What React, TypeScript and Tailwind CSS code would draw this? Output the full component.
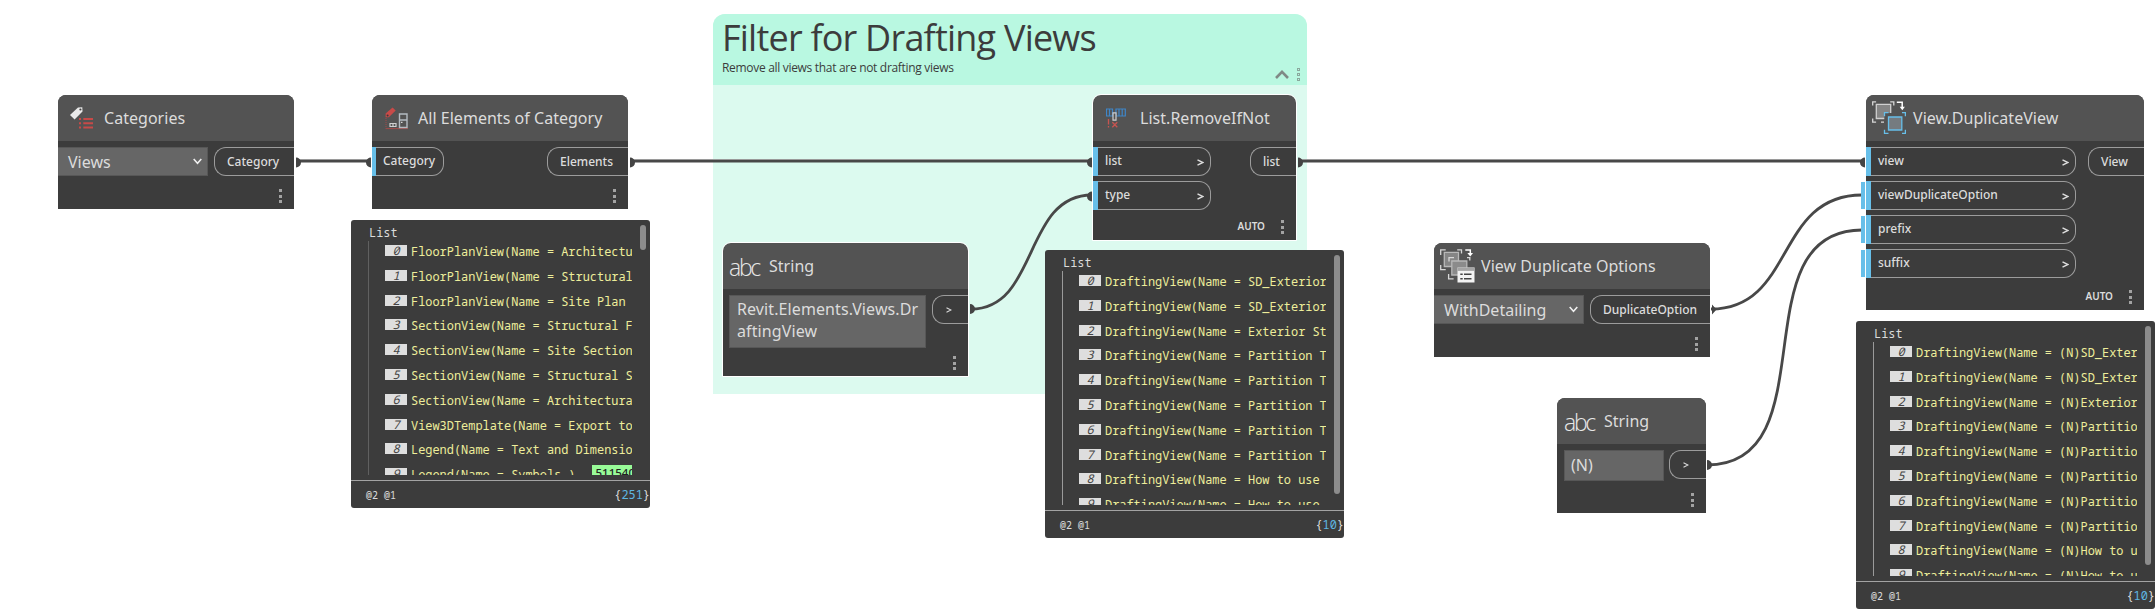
import React, { type ReactNode } from "react";

const sans = "font-['Noto_Sans','Open_Sans',sans-serif]";
const mono = "font-['Noto_Sans_Mono','Liberation_Mono',monospace]";

function Dots() {
  return (
    <div className="flex w-[3px] flex-col gap-[2.5px]">
      <i className="h-[3px] w-[3px] bg-[#a3a3a3]" />
      <i className="h-[3px] w-[3px] bg-[#a3a3a3]" />
      <i className="h-[3px] w-[3px] bg-[#a3a3a3]" />
    </div>
  );
}

type NodeProps = {
  place: string;
  title: string;
  icon: ReactNode;
  iconBox: string;
  auto?: boolean;
  children: ReactNode;
};

function Node({ place, title, icon, iconBox, auto, children }: NodeProps) {
  return (
    <section className={`absolute flex flex-col rounded-t-[8px] bg-[#3c3c3c] text-[#dcdcdc] ${place}`}>
      <header className="flex h-[46px] shrink-0 items-center rounded-t-[8px] bg-[#535353]">
        <div className={`shrink-0 ${iconBox}`}>{icon}</div>
        <h2 className="whitespace-nowrap text-[16px] leading-[22px] tracking-[0.03px]">{title}</h2>
      </header>
      <div className="flex items-start justify-between pt-[6px]">{children}</div>
      <footer className="mt-auto flex items-center justify-end pr-[12px] pb-[6px]">
        {auto && <span className="mr-[16px] -mt-[2px] text-[10px] leading-[12px] font-semibold">AUTO</span>}
        <Dots />
      </footer>
    </section>
  );
}

function Input({ label, size, chevron, tab }: { label: string; size: string; chevron?: boolean; tab?: boolean }) {
  return (
    <div
      className={`relative flex h-[29px] items-center justify-between rounded-r-[12px] border border-l-0 border-[#9c9c9c] pr-[6px] text-[12px] font-medium ${size}`}
    >
      {tab && <span className="absolute top-0 -left-[5px] h-[27px] w-[4px] bg-[#67bfe9]" />}
      <span className="flex h-[29px] items-center">
        <span className={`mr-[7px] h-[29px] bg-[#67bfe9] ${chevron ? "w-[5px]" : "w-[4px]"}`} />
        <span className="-mt-[1px]">{label}</span>
      </span>
      {chevron && <Caret />}
    </div>
  );
}

function Caret() {
  return (
    <svg className="mt-px h-[7px] w-[7px]" viewBox="0 0 7 7" fill="none" stroke="#dcdcdc" strokeWidth="1.5">
      <path d="M0.5 0.8 6 3.5 0.5 6.2" />
    </svg>
  );
}

function Output({ label, size }: { label: ReactNode; size: string }) {
  return (
    <div
      className={`flex h-[29px] shrink-0 items-center rounded-l-[12px] border border-r-0 border-[#9c9c9c] pl-[12px] text-[12px] font-medium ${size}`}
    >
      {label}
    </div>
  );
}

function Select({ value, size }: { value: string; size: string }) {
  return (
    <div className={`flex h-[29px] items-center justify-between border border-l-0 border-[#575757] bg-[#666] pr-[5px] pl-[10px] text-[16px] ${size}`}>
      <span>{value}</span>
      <svg className="h-[7px] w-[9px]" viewBox="0 0 9 7" fill="none" stroke="#efefef" strokeWidth="1.6">
        <path d="M0.7 1 4.5 5.2 8.3 1" />
      </svg>
    </div>
  );
}

const smallCaret = (
  <svg className="h-[6px] w-[6px]" viewBox="0 0 6 6" fill="none" stroke="#dcdcdc" strokeWidth="1.1">
    <path d="M0.5 0.8 5 3 0.5 5.2" />
  </svg>
);

const abc = <span className="relative top-px font-['Open_Sans','Lato',sans-serif] text-[23px] leading-[30px] font-light tracking-[-2.3px] text-[#e8e8e8]">abc</span>;

const categoriesIcon = (
  <svg className="h-[22px] w-[24px]" viewBox="0 0 24 22">
    <path d="M0 8 8 0.4 12.3 0.2 12.5 4.6 4.6 12.6Z" fill="#e9e9e9" />
    <circle cx="10.4" cy="2.5" r="1.1" fill="#444" />
    <path d="M9 12h2M9 16.2h2M9 20.4h2M13.3 12h9.7M13.3 16.2h9.7M13.3 20.4h9.7" stroke="#c74a48" strokeWidth="2" />
  </svg>
);

const elementsIcon = (
  <svg className="h-[23px] w-[24px]" viewBox="0 0 24 23" fill="none">
    <path d="M0.6 6.6 7.6 0.4 10.7 3.4 3.8 10.2 0.6 10.2Z" fill="#c74a48" />
    <circle cx="2.6" cy="8.4" r="1" fill="#3a3a3a" />
    <path d="M1 11v10" stroke="#a34a48" strokeDasharray="1 1" />
    <path d="M0.5 21.6h22.5" stroke="#a34a48" />
    <path d="M5 16.5h6v3H5zM8 16.5v3" stroke="#cfcfcf" strokeWidth="1.2" />
    <path d="M14.5 7h7.5v13.5h-7.5zM14.5 13h7.5" stroke="#b4bcc2" strokeWidth="1.4" />
    <path d="M16 15.3h1.5" stroke="#d8d8d8" strokeWidth="1.2" />
  </svg>
);

const removeIcon = (
  <svg className="h-[20px] w-[20px]" viewBox="0 0 20 20" fill="none">
    <path d="M0.5 1h6v7h-6zM3.5 1v7M10 1h9.3v7H10zM13 1v7M16.2 1v7" stroke="#3f86c8" strokeWidth="1.2" />
    <path d="M7 4.8h3v7.4H7z" fill="#535353" stroke="#cfcfcf" strokeWidth="1.2" />
    <path d="M2.5 11v5.4M2.5 18v1.6M6.3 14.2l5 5M11.3 14.2l-5 5" stroke="#c75450" strokeWidth="1.3" />
  </svg>
);

const duplicateIcon = (
  <svg className="-mt-px h-[33px] w-[34px]" viewBox="0 0 34 33" fill="none" strokeWidth="1.3">
    <path d="M0.7 4.5V0.8h3.4M18.2 0.8h3.6v3.7M0.7 17.5v3.7h3.4M12 21.2H9" stroke="#d8d8d8" />
    <path d="M4.3 3.3h14.4v14.2H4.3z" fill="#858585" stroke="#d0d0d0" />
    <path d="M24.8 1.3h5.4v6" stroke="#fff" strokeWidth="1.5" />
    <path d="M27.7 5.8h5.2l-2.6 3.4z" fill="#fff" />
    <path d="M12.3 12h13v15h-13z" fill="#535353" />
    <path d="M12.5 15.2v-3.6h4M30 11.6h3.4v3.6M12.5 28.7v3.6h4M30 32.3h3.4v-3.6" stroke="#67bfe9" />
    <path d="M16.5 16h13.3v13H16.5z" fill="#757b80" stroke="#67bfe9" />
  </svg>
);

const optionsIcon = (
  <svg className="-mt-px h-[34px] w-[35px]" viewBox="0 0 35 34" fill="none" strokeWidth="1.3">
    <path d="M0.7 6V0.8h5M17.2 0.8h4.3v3.7M0.7 16v4.6h5" stroke="#d8d8d8" />
    <path d="M4.3 3.3h14.2v14.2H4.3z" fill="#858585" stroke="#b8b8b8" />
    <path d="M25.3 0.9h5v4" stroke="#fff" strokeWidth="1.5" />
    <path d="M27.4 4h5.6l-2.8 3.6z" fill="#fff" />
    <path d="M9 12.5V8.6h5M27 8.6h2.8v3M8.6 25v4.8h5" stroke="#d8d8d8" />
    <path d="M11.8 12h15v14h-15z" fill="#8b8b8b" stroke="#b8b8b8" />
    <path d="M17.5 18.5h17v15h-17z" fill="#f3f3f3" />
    <path d="M17.5 18.5h17v3.4h-17z" fill="#a5a5a5" />
    <path d="M20.3 25.2h2.4M24 25.2h7.5M20.3 29.7h2.4M24 29.7h7.5" stroke="#444" strokeWidth="1.5" />
  </svg>
);

type PreviewProps = {
  place: string;
  rows: string[];
  rule: string;
  count: string;
  thumb: string;
  tag?: string;
};

function Preview({ place, rows, rule, count, thumb, tag }: PreviewProps) {
  return (
    <section className={`absolute h-[288px] w-[299px] rounded-[3px] bg-[#3c3c3c] text-[11.93px] ${mono} ${place}`}>
      <div className="flex h-[261px] flex-col border-b border-[#a3a3a3] pb-[5px] pl-[18px]">
        <div className="h-[21px] shrink-0 pt-[3px] leading-[18px] text-[#dcdcdc]">List</div>
        <div className={`-ml-px flex min-h-0 w-[264px] flex-1 flex-col overflow-hidden border-l pt-px ${rule}`}>
          {rows.map((row, i) => (
            <div key={row + i} className="flex h-[24.8px] shrink-0 items-start">
              <span className="mt-[1px] ml-[16px] flex h-[15px] w-[22px] shrink-0 items-center justify-center bg-[#dedede] bg-clip-content py-[2px] pl-0 leading-[15px] text-[#444] italic">
                {i}
              </span>
              <span className="ml-[4px] leading-[18px] whitespace-pre text-[#eeee9b]">{row}</span>
              {tag && i === 9 && (
                <span className="ml-[16px] h-[14px] bg-[#98fb98] px-[4px] font-['Noto_Sans',sans-serif] text-[11.5px] leading-[16px] font-medium text-[#222]">
                  {tag}
                </span>
              )}
            </div>
          ))}
        </div>
      </div>
      <span className={`absolute top-[5px] left-[289px] w-[6px] rounded-full bg-[#8c8c8c] ${thumb}`} />
      <div className="flex h-[27px] items-center justify-between pl-[15px] text-[#dcdcdc]">
        <span className="mt-px text-[10px]">@2 @1</span>
        <span>
          {"{"}
          <span className="text-[#5fb6e2]">{count}</span>
          {"}"}
        </span>
      </div>
    </section>
  );
}

const allElements = [
  "FloorPlanView(Name = Architectu",
  "FloorPlanView(Name = Structural",
  "FloorPlanView(Name = Site Plan ",
  "SectionView(Name = Structural F",
  "SectionView(Name = Site Section",
  "SectionView(Name = Structural S",
  "SectionView(Name = Architectura",
  "View3DTemplate(Name = Export to",
  "Legend(Name = Text and Dimensio",
  "Legend(Name = Symbols )",
];

const viewNames = [
  "SD_Exterior",
  "SD_Exterior",
  "Exterior St",
  "Partition T",
  "Partition T",
  "Partition T",
  "Partition T",
  "Partition T",
  "How to use ",
  "How to use ",
];

const filtered = viewNames.map((n) => `DraftingView(Name = ${n}`);
const duplicated = viewNames.map((n) => `DraftingView(Name = (N)${n.slice(0, 8)}`);

function Wires() {
  return (
    <svg className="absolute top-0 left-0 h-[616px] w-[2156px]" viewBox="0 0 2156 616" fill="none">
      <g stroke="#484848" strokeWidth="2.8">
        <path d="M971 309C1039 309 1023 195 1092 195" />
        <path d="M1711 309C1795 309 1775 195 1862 195" />
        <path d="M1707 465C1830 465 1738 230 1862 230" />
      </g>
      <path d="M297 161.200H370M630 161.200H1092M1298 161.200H1865" stroke="#484848" strokeWidth="2.400" />
      <path d="M297 159.500H370M630 159.500H1092M1298 159.500H1865" stroke="#9a9a9a" />
      <g fill="#444">
        <path d="M296 157.5a5 5 0 0 1 0 10zM630 157.5a5 5 0 0 1 0 10zM1298 157.5a5 5 0 0 1 0 10zM970 304a5 5 0 0 1 0 10zM1712 304.500l4.500 5-4.500 5zM1707 460a5 5 0 0 1 0 10z" />
        <path d="M371 157.500a5 5 0 0 0 0 10zM1092 157.500a5 5 0 0 0 0 10zM1092 191.500a5 5 0 0 0 0 10zM1865 157.500a5 5 0 0 0 0 10z" />
      </g>
    </svg>
  );
}

export default function App() {
  return (
    <main className={`relative h-[616px] w-[2156px] overflow-hidden bg-white ${sans}`}>
      <section className="absolute top-[14px] left-[713px] h-[380px] w-[594px] rounded-t-[12px] bg-[#dcfaef] font-['Open_Sans','Noto_Sans',sans-serif] text-[#3c3c3c]">
        <header className="flex h-[71px] justify-between rounded-t-[12px] bg-[#b9f8e1] pr-[7px] pl-[9px]">
          <div className="flex flex-col">
            <h1 className="text-[36px] leading-[47px] tracking-[-0.78px] whitespace-nowrap">Filter for Drafting Views</h1>
            <p className="text-[12px] leading-[14px] tracking-[-0.31px] whitespace-nowrap">Remove all views that are not drafting views</p>
          </div>
          <div className="flex items-end gap-[8px] pb-[4px]">
            <svg className="mb-[2px] h-[9px] w-[14px]" viewBox="0 0 14 9" fill="none" stroke="#7f8a86" strokeWidth="2.6">
              <path d="M1 8 7 1.900 13 8" />
            </svg>
            <div className="flex flex-col gap-[2px]">
              <i className="h-[3px] w-[3px] border border-[#8aa99d]" />
              <i className="h-[3px] w-[3px] border border-[#8aa99d]" />
              <i className="h-[3px] w-[3px] border border-[#8aa99d]" />
            </div>
          </div>
        </header>
      </section>

      <Wires />

      <Node place="left-[58px] top-[95px] h-[114px] w-[236px]" title="Categories" icon={categoriesIcon} iconBox="w-[46px] pl-[12px]">
        <Select value="Views" size="w-[150px]" />
        <Output label="Category" size="w-[80px]" />
      </Node>

      <Node place="left-[372px] top-[95px] h-[114px] w-[256px]" title="All Elements of Category" icon={elementsIcon} iconBox="w-[46px] pl-[13px]">
        <Input label="Category" size="w-[72px]" />
        <Output label="Elements" size="w-[81px]" />
      </Node>

      <Node place="left-[723px] top-[243px] h-[133px] w-[245px] outline outline-white" title="String" icon={abc} iconBox="w-[46px] pl-[6px]">
        <div className="ml-[6px] h-[53px] w-[197px] border border-[#575757] bg-[#666] pt-[2px] pl-[7px] text-[16px] leading-[22px] tracking-[0.1px]">
          Revit.Elements.Views.Dr
          <br />
          aftingView
        </div>
        <Output label={<span className="pl-px">{smallCaret}</span>} size="w-[36px]" />
      </Node>

      <Node place="left-[1093px] top-[95px] h-[145px] w-[203px] outline outline-white" title="List.RemoveIfNot" icon={removeIcon} iconBox="w-[47px] pl-[13px]" auto>
        <div className="flex flex-col gap-[5px]">
          <Input label="list" size="w-[118px]" chevron />
          <Input label="type" size="w-[118px]" chevron />
        </div>
        <Output label="list" size="w-[46px]" />
      </Node>

      <Node place="left-[1434px] top-[243px] h-[114px] w-[276px]" title="View Duplicate Options" icon={optionsIcon} iconBox="w-[47px] pl-[6px]">
        <Select value="WithDetailing" size="w-[150px]" />
        <Output label="DuplicateOption" size="w-[120px]" />
      </Node>

      <Node place="left-[1557px] top-[398px] h-[115px] w-[149px]" title="String" icon={abc} iconBox="w-[47px] pl-[7px]">
        <div className="ml-[7px] h-[31px] w-[100px] border border-[#575757] bg-[#666] pl-[6px] text-[16px] leading-[28px]">(N)</div>
        <Output label={<span className="pl-px">{smallCaret}</span>} size="w-[37px]" />
      </Node>

      <Node place="left-[1866px] top-[95px] h-[215px] w-[278px]" title="View.DuplicateView" icon={duplicateIcon} iconBox="w-[47px] pl-[6px]" auto>
        <div className="flex flex-col gap-[5px]">
          <Input label="view" size="w-[210px]" chevron />
          <Input label="viewDuplicateOption" size="w-[210px]" chevron tab />
          <Input label="prefix" size="w-[210px]" chevron tab />
          <Input label="suffix" size="w-[210px]" chevron tab />
        </div>
        <Output label="View" size="w-[56px]" />
      </Node>

      <Preview place="left-[351px] top-[220px]" rows={allElements} rule="border-[#606060]" count="251" thumb="h-[25px]" tag="511540" />
      <Preview place="left-[1045px] top-[250px]" rows={filtered} rule="border-[#9a9a9a]" count="10" thumb="h-[239px]" />
      <Preview place="left-[1856px] top-[321px]" rows={duplicated} rule="border-[#9a9a9a]" count="10" thumb="h-[239px]" />
    </main>
  );
}
